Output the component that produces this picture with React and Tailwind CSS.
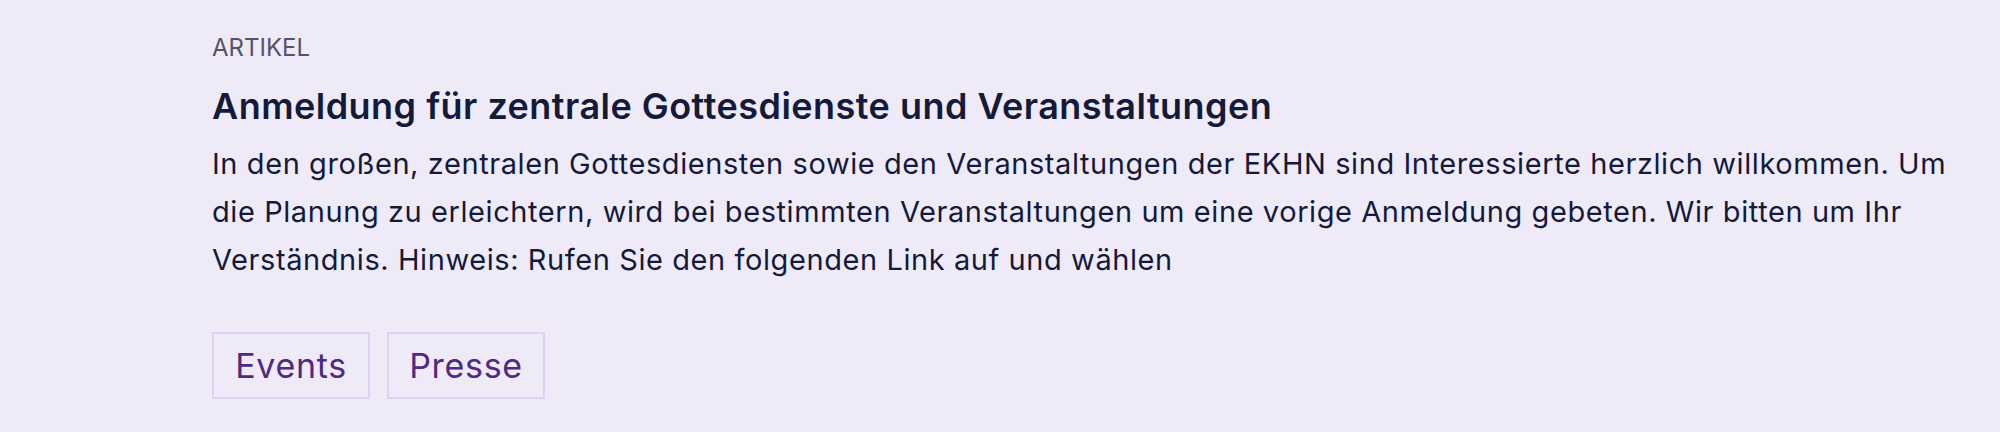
const tags = ['Events', 'Presse'];

export default function App() {
  return (
    <div className="min-h-[432px] bg-[#efeaf8] pl-[212px] pr-[16px] pt-8 font-['Inter',sans-serif]">
      {/* Teaser eines Artikels */}
      <article>
        <p className="text-[24px] leading-[32px] uppercase text-[#55536a]">Artikel</p>
        <h2 className="mt-[18px] text-[36px] leading-[48px] font-semibold tracking-[0.013em] text-[#141a3a]">
          Anmeldung für zentrale Gottesdienste und Veranstaltungen
        </h2>
        <p className="mt-[10px] text-[29px] leading-[48px] tracking-[0.02em] text-[#141a3a]">
          In den großen, zentralen Gottesdiensten sowie den Veranstaltungen der EKHN sind Interessierte herzlich
          willkommen. Um die Planung zu erleichtern, wird bei bestimmten Veranstaltungen um eine vorige Anmeldung
          gebeten. Wir bitten um Ihr Verständnis. Hinweis: Rufen Sie den folgenden Link auf und wählen
        </p>

        {/* Schlagworte */}
        <div className="mt-[48px] flex gap-[17px]">
          {tags.map((tag) => (
            <a
              key={tag}
              href="#"
              className="flex h-[67px] w-[158px] items-center justify-center border-2 border-[#ddd0f2] text-[34px] tracking-[0.02em] text-[#4f2a7e]"
            >
              {tag}
            </a>
          ))}
        </div>
      </article>
    </div>
  );
}
